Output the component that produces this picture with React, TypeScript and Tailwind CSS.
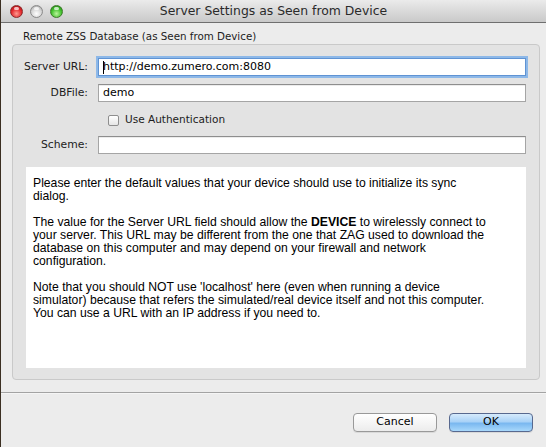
import React from 'react';

const ui = "font-['DejaVu_Sans',sans-serif]";

function Light({ color }: { color: 'red' | 'gray' | 'green' }) {
  const bg =
    color === 'red'
      ? 'bg-[radial-gradient(circle_at_50%_70%,#ff9a8f_0%,#e2262b_55%,#9c0d10_100%)] border-[#8a2a2a]'
      : color === 'green'
      ? 'bg-[radial-gradient(circle_at_50%_70%,#b9f59a_0%,#3fbf2b_55%,#1f7a12_100%)] border-[#3d7a2a]'
      : 'bg-[radial-gradient(circle_at_50%_70%,#ffffff_0%,#d4d4d4_55%,#9a9a9a_100%)] border-[#8a8a8a]';
  return (
    <div className={`relative w-[13px] h-[13px] rounded-full border ${bg}`}>
      <div className="absolute left-[3px] top-[1px] w-[5px] h-[3px] rounded-full bg-white/70" />
    </div>
  );
}

function Field({ value, focused }: { value?: string; focused?: boolean }) {
  return (
    <div
      className={`h-[18px] bg-white flex items-center px-[4px] text-[11px] text-black ${ui} ${
        focused
          ? 'border border-[#5f93d3] shadow-[0_0_0_2px_#8db8e8]'
          : 'border border-[#a5a5a5] border-t-[#8e8e8e] shadow-[inset_0_1px_0_#ececec]'
      }`}
    >
      {focused && <span className="w-px h-[13px] bg-black mr-[-1px]" />}
      {value}
    </div>
  );
}

export default function App() {
  const label = `text-[10.8px] text-[#1c1c1c] ${ui} text-right leading-[18px] whitespace-nowrap`;
  return (
    <div className="w-[546px] h-[447px] bg-[#ececec] border-l border-[#3b2f22] flex flex-col overflow-hidden">
      {/* title bar */}
      <div className="relative h-[23px] shrink-0 bg-gradient-to-b from-[#ebebeb] to-[#c9c9c9] border-b border-[#6f6f6f] flex items-center">
        <div className="flex gap-[7px] pl-[9px]">
          <Light color="red" />
          <Light color="gray" />
          <Light color="green" />
        </div>
        <div className={`absolute inset-0 flex items-center justify-center text-[12.4px] text-[#2a2a2a] ${ui}`}>
          Server Settings as Seen from Device
        </div>
      </div>

      <div className={`h-[21px] pl-[22px] pt-[7px] leading-[13px] text-[10.3px] text-[#1c1c1c] ${ui}`}>
        Remote ZSS Database (as Seen from Device)
      </div>

      {/* group box */}
      <div className="ml-[11px] mr-[6px] h-[336px] shrink-0 rounded-[4px] border border-[#c9c9c9] bg-[#e3e3e3] pt-[13px] pr-[13px] pl-[3px] flex flex-col">
        <div className="grid grid-cols-[72px_1fr] gap-x-[10px] gap-y-[8px]">
          <div className={label}>Server URL:</div>
          <Field value="http://demo.zumero.com:8080" focused />
          <div className={label}>DBFile:</div>
          <Field value="demo" />
          <div />
          <div className="h-[18px] flex items-center pl-[10px] gap-[6px] pt-[2px]">
            <div className="w-[11px] h-[11px] rounded-[2px] border border-[#8e8e8e] bg-gradient-to-b from-white to-[#e6e6e6]" />
            <span className={`text-[10.5px] text-[#1c1c1c] ${ui}`}>Use Authentication</span>
          </div>
          <div className={label}>Scheme:</div>
          <Field />
        </div>

        <div className="mt-[13px] ml-[10px] h-[201px] bg-white pl-[7px] pt-[10px] text-[12.2px] leading-[13px] text-black font-['Liberation_Sans',Arial,sans-serif] whitespace-nowrap">
          <p className="mb-[13px]">
            Please enter the default values that your device should use to initialize its sync
            <br />
            dialog.
          </p>
          <p className="mb-[13px]">
            The value for the Server URL field should allow the <b>DEVICE</b> to wirelessly connect to
            <br />
            your server. This URL may be different from the one that ZAG used to download the
            <br />
            database on this computer and may depend on your firewall and network
            <br />
            configuration.
          </p>
          <p>
            Note that you should NOT use 'localhost' here (even when running a device
            <br />
            simulator) because that refers the simulated/real device itself and not this computer.
            <br />
            You can use a URL with an IP address if you need to.
          </p>
        </div>
      </div>

      <div className="mt-[12px] h-px shrink-0 bg-[#a3a3a3]" />
      <div className="h-px shrink-0 bg-[#f5f5f5]" />

      <div className="flex justify-end gap-[12px] pr-[13px] pt-[19px]">
        <button
          className={`w-[84px] h-[19px] rounded-[4px] border border-[#999999] bg-gradient-to-b from-white to-[#ececec] text-[11px] text-black ${ui} shadow-[0_1px_0_rgba(0,0,0,0.08)]`}
        >
          Cancel
        </button>
        <button
          className={`w-[84px] h-[19px] rounded-[4px] border border-[#58698f] bg-[linear-gradient(to_bottom,#d6ebfc_0%,#a9d2f7_45%,#7ab8f0_55%,#a8d8fb_100%)] text-[11px] text-black ${ui} shadow-[0_1px_0_rgba(0,0,0,0.08)]`}
        >
          OK
        </button>
      </div>
    </div>
  );
}
